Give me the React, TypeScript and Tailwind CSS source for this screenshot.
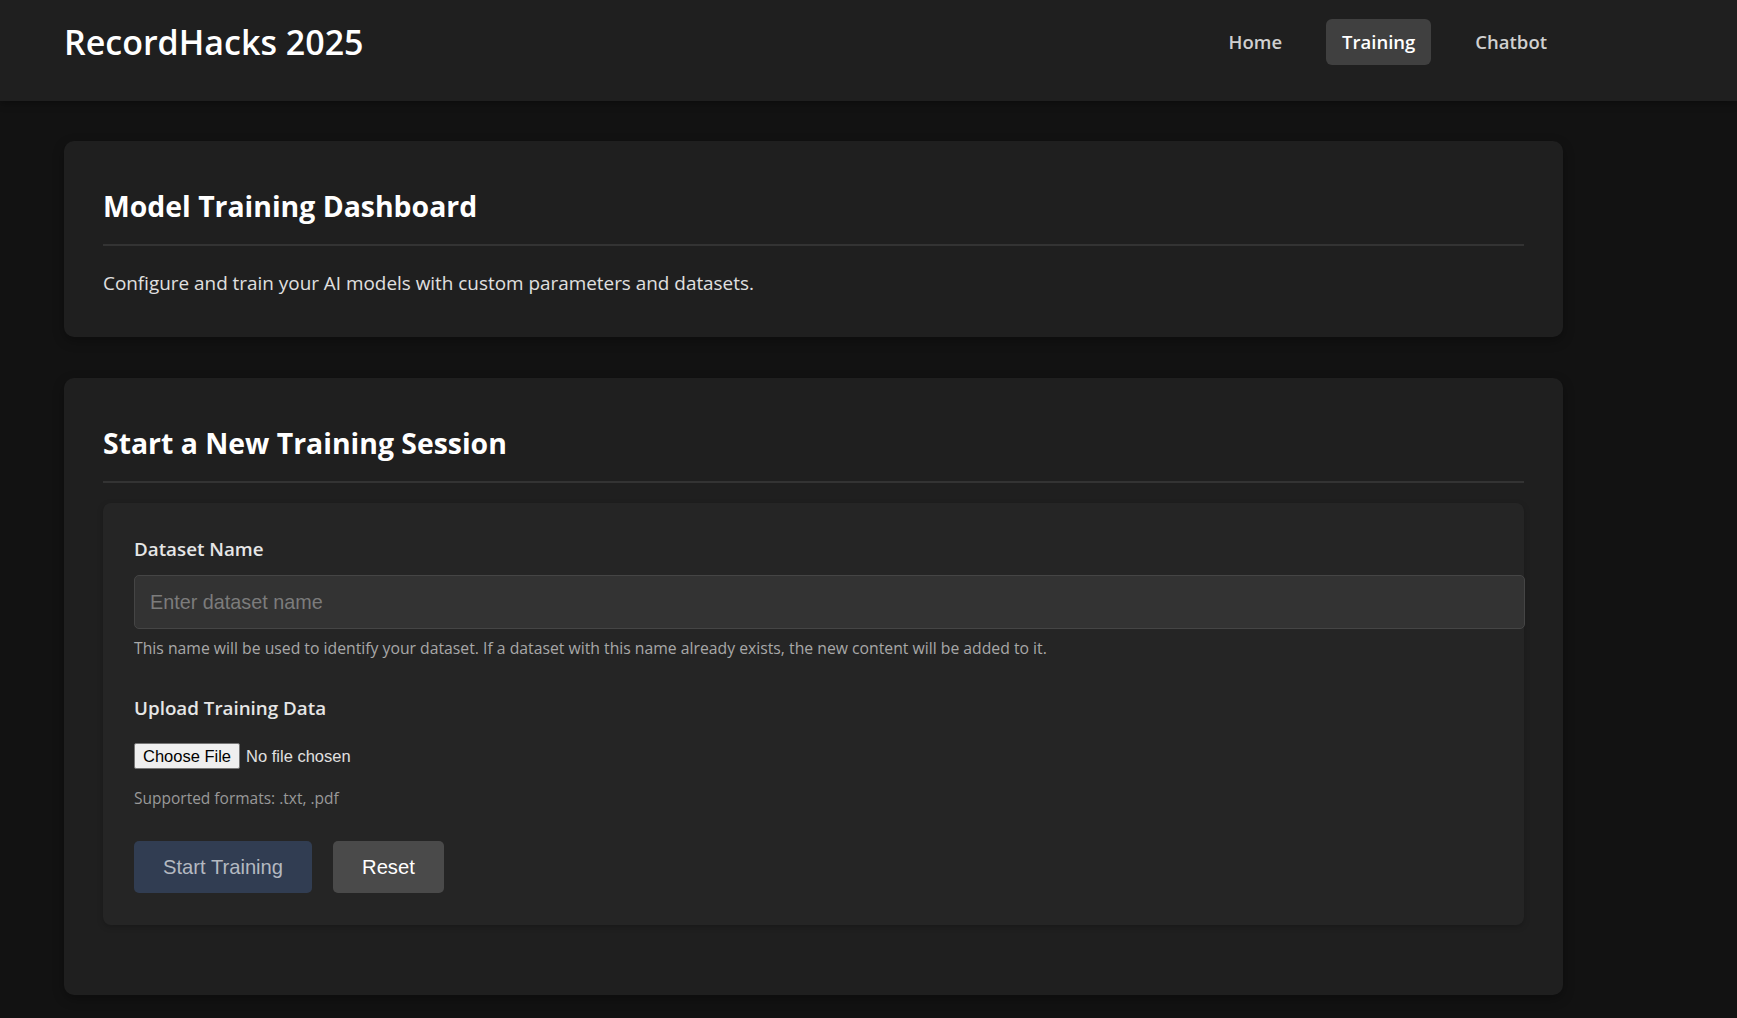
import React from "react";

const navLinks = [
  { label: "Home", active: false },
  { label: "Training", active: true },
  { label: "Chatbot", active: false },
];

function Header() {
  return (
    <header className="h-[101px] bg-[#1f1f1f] pt-[19px] shadow-[0_2px_8px_rgba(0,0,0,0.35)]">
      <div className="ml-16 flex h-[46px] w-[1499px] items-center justify-between">
        <h1 className="text-[34px] font-semibold leading-none text-white">RecordHacks 2025</h1>
        <nav className="flex items-center gap-[28px]">
          {navLinks.map((link) => (
            <a
              key={link.label}
              href="#"
              className={
                link.active
                  ? "flex h-[46px] items-center rounded-[6px] bg-[#404040] px-4 text-[18.5px] font-semibold text-white"
                  : "flex h-[46px] items-center rounded-[6px] px-4 text-[18.5px] font-semibold text-[#d0d0d0]"
              }
            >
              {link.label}
            </a>
          ))}
        </nav>
      </div>
    </header>
  );
}

function CardTitle({ children }: { children: React.ReactNode }) {
  return (
    <h2 className="border-b-2 border-[#333] pb-[13px] text-[28.4px] font-bold leading-[50px] text-white">
      {children}
    </h2>
  );
}

export default function App() {
  return (
    <div className="min-h-screen bg-[#121212] font-['Open_Sans',sans-serif] text-[#e0e0e0]">
      <Header />

      <main className="ml-16 flex w-[1499px] flex-col gap-[41px] pb-6 pt-10">
        {/* intro card */}
        <section className="rounded-[10px] bg-[#1f1f1f] px-[39px] py-10 shadow-[0_4px_12px_rgba(0,0,0,0.3)]">
          <CardTitle>Model Training Dashboard</CardTitle>
          <p className="mt-[23px] text-[18.9px] leading-[28px] text-[#e0e0e0]">
            Configure and train your AI models with custom parameters and datasets.
          </p>
        </section>

        {/* training form card */}
        <section className="rounded-[10px] bg-[#1f1f1f] px-[39px] pb-10 pt-10 shadow-[0_4px_12px_rgba(0,0,0,0.3)]">
          <CardTitle>Start a New Training Session</CardTitle>

          <form className="mb-[30px] mt-5 rounded-[8px] bg-[#252525] px-[31px] py-8 shadow-[0_2px_6px_rgba(0,0,0,0.2)]">
            <label className="block text-[18.8px] font-semibold leading-[28px] text-[#e6e6e6]">
              Dataset Name
            </label>
            <input
              type="text"
              placeholder="Enter dataset name"
              className="mt-3 box-content block h-[52px] w-full rounded-[5px] border border-[#454545] bg-[#333] px-[15px] py-0 font-['Liberation_Sans',Arial,sans-serif] text-[19.8px] text-white outline-none placeholder:text-[#7c7c7c]"
            />
            <p className="mt-2 text-[15.75px] leading-[23px] text-[#a8a8a8]">
              This name will be used to identify your dataset. If a dataset with this name already exists, the new content will be added to it.
            </p>

            <label className="mt-[34px] block text-[18.8px] font-semibold leading-[28px] text-[#e6e6e6]">
              Upload Training Data
            </label>
            <div className="mt-[21px] flex h-[26px] items-center">
              <input
                type="file"
                accept=".txt,.pdf"
                className="font-['Liberation_Sans',Arial,sans-serif] text-[16.5px] leading-[20px] text-[#e0e0e0] file:mr-[6px] file:h-[26px] file:rounded-[2px] file:border file:border-[#767676] file:bg-[#efefef] file:px-[8px] file:text-black"
              />
            </div>
            <p className="mt-[18px] text-[15.5px] leading-[23px] text-[#999]">Supported formats: .txt, .pdf</p>

            <div className="mt-[31px] flex gap-[21px] font-['Liberation_Sans',Arial,sans-serif] text-[20.2px]">
              <button type="button" className="h-[52px] rounded-[5px] bg-[#313d52] px-[29px] text-[#b4b9c1]">
                Start Training
              </button>
              <button type="button" className="h-[52px] rounded-[5px] bg-[#4a4a4a] px-[29px] text-white">
                Reset
              </button>
            </div>
          </form>
        </section>
      </main>
    </div>
  );
}
